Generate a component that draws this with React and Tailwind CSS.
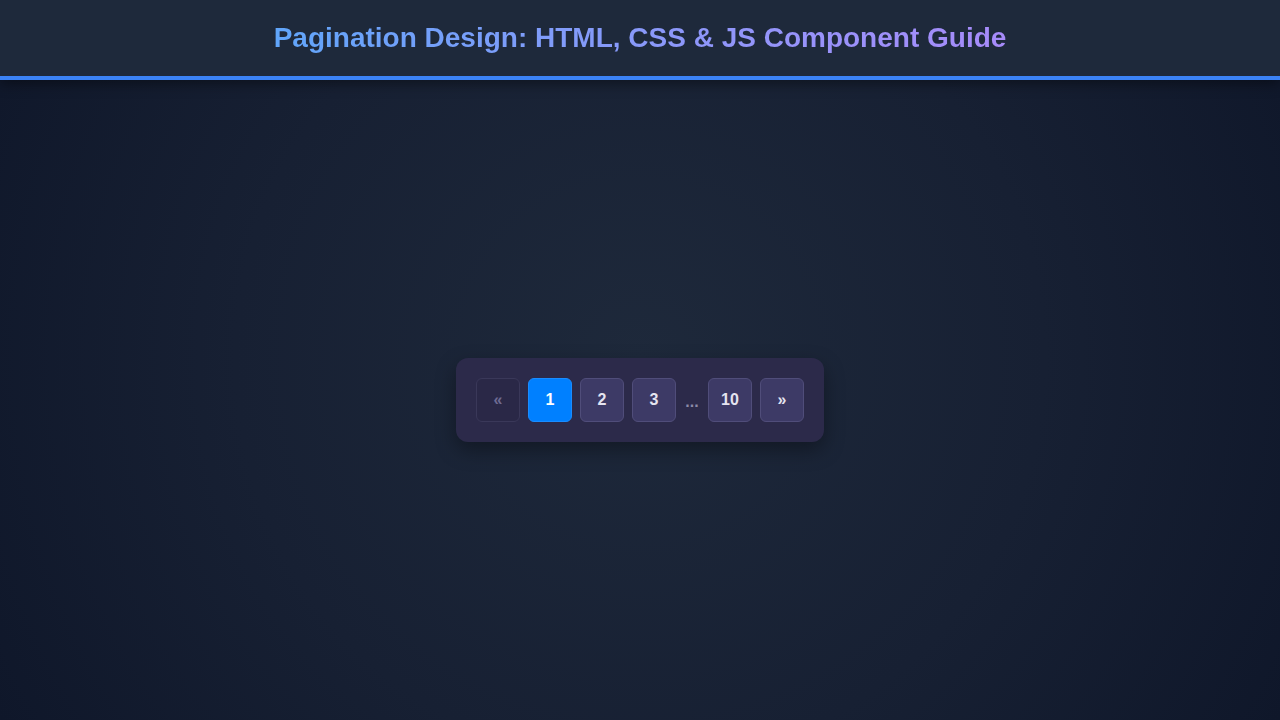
import React from 'react';

const PAGES = [1, 2, 3, '…', 10];

function PageButton({ children, active, disabled }) {
  const base =
    'w-11 h-11 flex items-center justify-center rounded-md text-base font-bold border';
  if (active) {
    return <button className={`${base} bg-[#0080ff] border-[#1a8cff] text-white`}>{children}</button>;
  }
  if (disabled) {
    return (
      <button className={`${base} bg-[#2a2847] border-[#3a3859] text-[#6e6b92]`} disabled>
        {children}
      </button>
    );
  }
  return <button className={`${base} bg-[#3d3a66] border-[#504d7a] text-[#e5e4f0]`}>{children}</button>;
}

export default function App() {
  return (
    <div
      className="w-full h-[720px] flex flex-col bg-[radial-gradient(circle_at_center,#1e293b_0%,#172033_55%,#0f172a_100%)]"
      style={{ fontFamily: '"Liberation Sans", Arial, sans-serif' }}
    >
      <header className="h-20 shrink-0 bg-[#1e293b] border-b-4 border-[#3b82f6] flex items-center justify-center shadow-[0_4px_12px_rgba(0,0,0,0.4)]">
        <h1 className="text-[28px] font-bold bg-gradient-to-r from-[#60a5fa] to-[#a78bfa] bg-clip-text text-transparent">
          Pagination Design: HTML, CSS &amp; JS Component Guide
        </h1>
      </header>

      <main className="flex-1 flex items-center justify-center">
        <nav className="flex items-center gap-2 p-5 rounded-xl bg-[#2c2a4a] shadow-[0_8px_20px_rgba(0,0,0,0.35)]">
          <PageButton disabled>«</PageButton>
          {PAGES.map((p) =>
            p === '…' ? (
              <span key="dots" className="w-4 text-center text-[#8b89a8] font-bold text-base pt-1">
                ...
              </span>
            ) : (
              <PageButton key={p} active={p === 1}>
                {p}
              </PageButton>
            )
          )}
          <PageButton>»</PageButton>
        </nav>
      </main>
    </div>
  );
}
